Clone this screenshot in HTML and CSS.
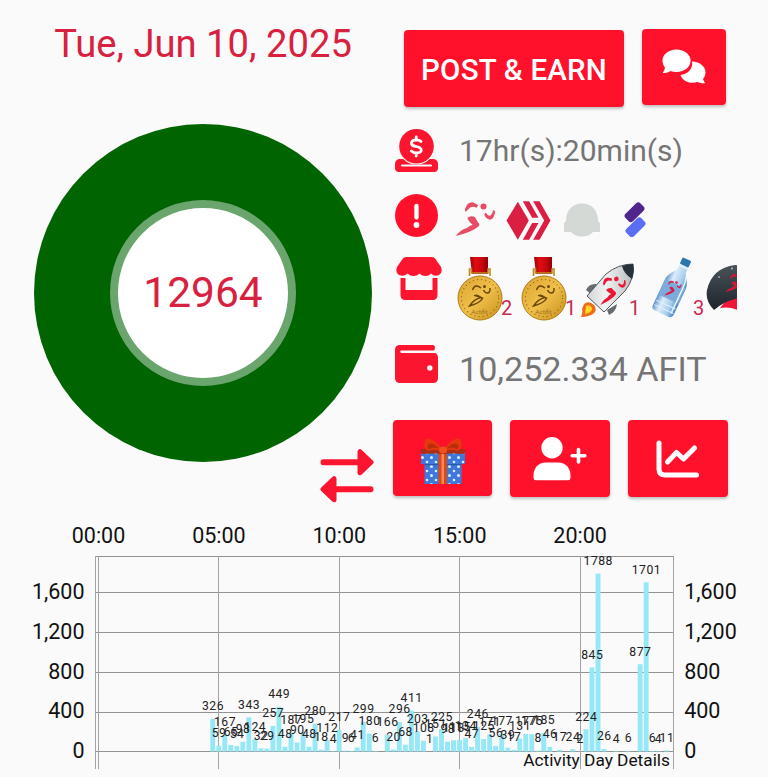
FILE: index.html
```html
<!DOCTYPE html>
<html lang="en">
<head>
<meta charset="utf-8">
<title>Activity Dashboard</title>
<link rel="stylesheet" href="styles.css">
</head>
<body>
<svg class="defs" aria-hidden="true">
  <defs>
    <linearGradient id="gold" x1="0" y1="0" x2="1" y2="1"><stop offset="0" stop-color="#d9a12c"/><stop offset=".5" stop-color="#f0c04a"/><stop offset="1" stop-color="#c98d1c"/></linearGradient>
    <linearGradient id="water" x1="0" y1="0" x2="1" y2="0"><stop offset="0" stop-color="#5e93c6"/><stop offset=".3" stop-color="#dcecf9"/><stop offset=".7" stop-color="#a6ccec"/><stop offset="1" stop-color="#4a86c0"/></linearGradient>
    <linearGradient id="hull" x1="0" y1="0" x2="1" y2="0"><stop offset="0" stop-color="#d2d4d6"/><stop offset=".4" stop-color="#f1f2f3"/><stop offset="1" stop-color="#b9bcbf"/></linearGradient>
    <linearGradient id="capShade" x1="0" y1="0" x2="0" y2="1"><stop offset="0" stop-color="#4a525a"/><stop offset="1" stop-color="#1d242b"/></linearGradient>
    <linearGradient id="ribbonTape" x1="0" y1="0" x2="1" y2="0"><stop offset="0" stop-color="#9b0008"/><stop offset=".3" stop-color="#e00c14"/><stop offset=".7" stop-color="#c4060e"/><stop offset="1" stop-color="#8e0006"/></linearGradient>
    <symbol id="runner" viewBox="12 34 128 112">
      <circle cx="101" cy="51" r="9.5"/>
      <path d="M43 60Q50 36 68 38L84 46L80 55Q62 46 53 60L45 68ZM131 62L137 65Q136 88 122 92Q110 92 103 76L108 70Q114 82 123 79Q130 74 131 62ZM50 87Q62 78 74 84L84 101Q92 108 84 114Q66 130 14 143Q32 122 48 119Q58 110 67 108Q56 100 50 87Z"/>
    </symbol>
    <symbol id="medal" viewBox="0 0 46 64">
      <path d="M13 0H31V17H15Z" fill="url(#ribbonTape)"/>
      <path d="M12.5 19V12H14.5V16H31V12H33V19" fill="none" stroke="#c08a20" stroke-width="1.6"/>
      <circle cx="23" cy="41" r="22" fill="url(#gold)" stroke="#b07c18" stroke-width="1"/>
      <circle cx="23" cy="41" r="18.6" fill="none" stroke="#8f6512" stroke-width="1.1" stroke-dasharray="1.1 3.1"/>
      <path d="M15.500 33Q18 26 24 31M33 31Q33.500 36 30 36Q28 36 26.500 33M12.500 49Q17 42 24 40.500L18 38.500Q20 37 25.500 41.500Q23 46 12.500 49Z" fill="none" stroke="#6b4709" stroke-width="1.500"/>
      <circle cx="27.500" cy="29.500" r="1.500" fill="#6b4709"/>
      <text class="medal-name" x="22.5" y="57" text-anchor="middle">Actifit</text>
    </symbol>
  </defs>
</svg>

<main class="page">
  <section class="summary">
    <div class="today">
      <h1 class="date">Tue, Jun 10, 2025</h1>
      <div class="ring"><div class="ring-core">12964</div></div>
      <svg class="swap" viewBox="0 0 54 54" fill="#fb152f" stroke="#fb152f" stroke-width="6" stroke-linecap="round" stroke-linejoin="round">
        <path d="M3.5 13.2H42M12 40.2H50.500" fill="none"/>
        <path d="M40 2.700V23.700L51 13.200ZM14 29.700V50.700L3 40.200Z" stroke-width="5"/>
      </svg>
    </div>

    <div class="details">
      <div class="actions">
        <button class="btn btn-post">POST &amp; EARN</button>
        <button class="btn btn-chat" aria-label="Chat">
          <svg width="44" height="36" viewBox="0 0 44 36" fill="#fff">
            <path d="M30 12.500C38 13 43.500 17.500 43.500 23.500C43.500 26 42.500 28.300 41 30C41.500 32 42.500 33 43.300 34.200C40.500 34.600 38 34 35.500 33C28 35.500 20.500 32 18.500 26C26 25.500 31.500 19 30 12.500Z"/>
            <path d="M14.500 .5C22.500 .5 28.600 5.500 28.600 11.500C28.600 18 22.500 23 14.500 23C12.300 23 10.300 22.600 8.500 22C6 23.700 3 24.300 .7 24C1.800 22.500 2.700 20.800 3 18.500C1.400 16.500 .5 14 .5 11.500C.5 5.500 6.500 .5 14.500 .5Z"/>
          </svg>
        </button>
      </div>

      <div class="row row-time">
        <svg class="icon" viewBox="0 0 43 43" fill="#fb152f">
          <path d="M4 30H9Q13 35 21.500 35Q30 35 34 30H39Q43 31 43 35V39Q43 43 39 43H4Q0 43 0 39V35Q0 31 4 30Z"/>
          <path d="M7 36.500H36" stroke="#fafafa" stroke-width="2.200" stroke-linecap="round"/>
          <circle cx="21.500" cy="17.300" r="18.300" fill="#fafafa"/>
          <circle cx="21.500" cy="17.300" r="17.300"/>
          <path d="M26 12.500Q24.500 10.800 21.500 10.800C15 10.800 15 16.500 20.500 17.300C28 18.300 28 24 21.500 24Q18.500 24 16.300 22M21.200 8V11M21.200 24V27" fill="none" stroke="#fff" stroke-width="2.800" stroke-linecap="round"/>
        </svg>
        <span class="reading">17hr(s):20min(s)</span>
      </div>

      <div class="row row-tokens">
        <svg class="icon" viewBox="0 0 43 43">
          <circle cx="21.500" cy="21.500" r="21.500" fill="#ff112b"/>
          <path d="M21.500 12V23.500" stroke="#fff" stroke-width="4.300" stroke-linecap="round"/>
          <circle cx="21.500" cy="31" r="2.900" fill="#fff"/>
        </svg>
        <div class="tokens">
          <svg class="tk-runner" fill="#e64c63"><use href="#runner" width="41" height="36"/></svg>
          <svg class="tk-hive" viewBox="367 61 134 117" fill="#db1f43">
            <path d="M368 119.500L402 63L435 119.500L402 177ZM417 62H436L464 111H445ZM448 62H467L500 119.500L467 177H448L481 119.500ZM445 127H464L436 177H417Z"/>
          </svg>
          <svg class="tk-cap" viewBox="0 0 36 34" fill="#d4d9d6"><path d="M0 29V20Q1 19 2 18C2 7 8 .5 18 .5C28 .5 34 7 34 18Q35 19 36 20V29H29Q25 33.500 18 33.500Q11 33.500 7 29Z"/></svg>
          <svg class="tk-links" viewBox="0 0 22 35">
            <rect x="0" y="5" width="21" height="10.500" rx="3" fill="#51268a" transform="rotate(-45 10.500 10.200)"/>
            <rect x="1" y="20" width="21" height="10.500" rx="3" fill="#5b6df2" transform="rotate(-45 11.500 25.200)"/>
          </svg>
        </div>
      </div>

      <div class="row row-items">
        <svg class="icon" viewBox="0 0 46 43" fill="#fb152f">
          <path d="M10 0H36Q38 0 39.500 2L45 10Q47 16 43 18Q38 20 35 16.500Q33 19 29.500 19Q26 19 23.500 16.500Q21 19 17.500 19Q14 19 11.500 16.500Q8 20 3 18Q-1 16 1 10L6.500 2Q8 0 10 0Z"/>
          <path d="M4.500 21H9.500V33H36.500V21H41.500V38Q41.500 43 36.500 43H9.500Q4.500 43 4.500 38Z"/>
        </svg>
        <div class="items">
          <span class="item item-medal"><svg width="46" height="64"><use href="#medal"/></svg><b>2</b></span>
          <span class="item item-medal"><svg width="46" height="64"><use href="#medal"/></svg><b>1</b></span>
          <span class="item item-rocket">
            <svg width="54" height="56" viewBox="0 0 54 56">
              <path d="M5 27Q8 20 16 21L10 31ZM26 47L36 41Q35 49 28 52Z" fill="#666c72"/>
              <path d="M3 41Q8 37 13 42Q17 47 12 51Q7 54 0 54Q2 49 1 46Z" fill="#ef6b17"/>
              <path d="M5 43Q9 41 11 45Q12 49 4 51Z" fill="#ffd62e"/>
              <path d="M6 33L25 11Q37 1 52 1Q54 15 44 28L23 49Z" fill="url(#hull)" stroke="#555" stroke-width="1"/>
              <path d="M41 3Q47 1 52 1Q54 8 51 16Q43 11 41 3Z" fill="#26313c"/>
              <use href="#runner" x="16" y="11" width="31" height="31" fill="#ed1534" transform="rotate(-12 31 27)"/>
            </svg><b>1</b>
          </span>
          <span class="item item-bottle">
            <svg width="44" height="62" viewBox="0 0 44 62">
              <g transform="rotate(25 22 31)">
                <path d="M18 6H27V11C28 16 34 19 34 27V55Q34 59 30 59H15Q11 59 11 55V27C11 19 17 16 18 11Z" fill="url(#water)"/>
                <path d="M11.500 26H33.500V43H11.500Z" fill="#7fabdc"/>
                <path d="M29 15Q31 20 31 26V55" fill="none" stroke="#eaf6ff" stroke-width="1.500"/>
                <path d="M12 49H33M12 54H33" stroke="#dff1ff" stroke-width="1"/>
                <rect x="17.800" y="-1" width="9.500" height="7" rx="1" fill="#2b76aa"/>
                <path d="M18 7.500H27" stroke="#e5f5ff" stroke-width="2"/>
              </g>
              <use href="#runner" x="13" y="21" width="18" height="20" fill="#cf2149"/>
            </svg><b>3</b>
          </span>
          <span class="item item-hat">
            <svg width="60" height="48" viewBox="0 0 60 48">
              <path d="M14 44Q22 33 29 31L60 30V47H34Q24 42 14 44Z" fill="#ee1739"/>
              <path d="M8 46Q-1 37 1 26Q6 4 29 1Q48 2 56 24L29 35Q17 38 8 46Z" fill="url(#capShade)"/>
              <circle cx="13" cy="13" r="1" fill="#9aa2a8"/><circle cx="26" cy="4.500" r="1" fill="#b7bcc0"/>
              <use href="#runner" x="19" y="8" width="22" height="22" fill="#d51637"/>
            </svg>
          </span>
        </div>
      </div>

      <div class="row row-wallet">
        <svg class="icon" viewBox="0 0 43 38">
          <path d="M5 0H37.500Q40 0 40 2.500Q40 5 38 7Q43 8 43 13V33Q43 38 38 38H5Q0 38 0 33V5Q0 0 5 0Z" fill="#fb152f"/>
          <path d="M6.500 6.700H41" stroke="#fafafa" stroke-width="2.400" stroke-linecap="round"/>
          <circle cx="34.800" cy="23" r="2.700" fill="#fff"/>
        </svg>
        <span class="reading reading-lg">10,252.334 AFIT</span>
      </div>

      <div class="shortcuts">
        <button class="btn btn-gift" aria-label="Rewards">
          <svg width="46" height="48" viewBox="0 0 46 48">
            <defs><pattern id="dots" width="9" height="9" patternUnits="userSpaceOnUse"><rect width="9" height="9" fill="#3e78dc"/><circle cx="2.500" cy="2.500" r="1.500" fill="#d6f1ff"/><circle cx="7" cy="7" r="1.300" fill="#d6f1ff"/></pattern></defs>
            <path d="M4.500 25H41.500V47H4.500Z" fill="url(#dots)"/>
            <path d="M1 16H45V27H1Z" fill="url(#dots)"/>
            <path d="M4.500 27.700H41.500" stroke="#275bad" stroke-width="1.200"/>
            <path d="M18.500 15H27V47H18.500Z" fill="#dc4917"/><path d="M21.500 15H24V47H21.500Z" fill="#f48a50"/>
            <path d="M0 13Q8 10 22 14Q37 10 46 13L44 17Q30 16 23 17Q14 16 2 17Z" fill="#a92f16"/>
            <path d="M22 13C17 4 9 0 6 2C3 6 4 12 8 14Q16 11 22 15ZM24 13C29 4 37 0 40 2C43 6 42 12 38 14Q30 11 24 15Z" fill="#e6380f"/>
            <path d="M20 12Q12 5 9 7Q6 10 9 12Q15 9 20 12ZM26 12Q34 5 37 7Q40 10 37 12Q31 9 26 12Z" fill="#b92c0c"/>
            <ellipse cx="23" cy="13" rx="4" ry="3.500" fill="#f05020"/>
          </svg>
        </button>
        <button class="btn btn-invite" aria-label="Invite">
          <svg width="54" height="44" viewBox="0 0 54 44" fill="#fff">
            <circle cx="19" cy="10.800" r="10.700"/>
            <path d="M13 25.500H25C33 25.500 37.500 31 37.500 39V41Q37.500 43.300 35 43.300H3Q.5 43.300 .5 41V39C.5 31 5 25.500 13 25.500Z"/>
            <path d="M45.500 12.500V25M39.200 18.800H51.800" stroke="#fff" stroke-width="3.600" stroke-linecap="round"/>
          </svg>
        </button>
        <button class="btn btn-stats" aria-label="Statistics">
          <svg width="44" height="38" viewBox="0 0 44 38" fill="none" stroke="#fff" stroke-width="5" stroke-linecap="round" stroke-linejoin="round">
            <path d="M3 3V29Q3 35 9 35H40.500M11.500 22L20.500 12.500L27.500 19L38.500 8"/>
          </svg>
        </button>
      </div>
    </div>
  </section>

  <svg class="chart" id="chart" width="768" height="257" viewBox="0 520 768 257" role="img" aria-label="Activity Day Details"></svg>
</main>
<script src="chart.js"></script>
</body>
</html>
```
FILE: styles.css
```css
* { box-sizing: border-box; }

body {
  margin: 0;
  background: #fafafa;
  font-family: Roboto, "Liberation Sans", sans-serif;
}

.defs { position: absolute; width: 0; height: 0; }

.page { width: 768px; height: 777px; overflow: hidden; }

.summary {
  display: grid;
  grid-template-columns: 393px 1fr;
  height: 520px;
}

.today { display: flex; flex-direction: column; padding: 20px 0 0 34px; }

.date {
  width: 338px;
  height: 48px;
  margin: 0;
  text-align: center;
  font-size: 38.200px;
  line-height: 48px;
  font-weight: 400;
  color: #d8213f;
  white-space: nowrap;
}

.ring {
  display: flex;
  width: 338px;
  height: 338px;
  margin-top: 56px;
  border-radius: 50%;
  background: #006400;
}

.ring-core {
  width: 186px;
  height: 186px;
  margin: auto;
  border: 8.500px solid #6ba56e;
  border-radius: 50%;
  background: #fff;
  color: #d8213f;
  font-size: 42.500px;
  line-height: 169px;
  text-align: center;
}

.swap { width: 54px; height: 54px; margin: -13px 0 0 286px; }

.details { display: flex; flex-direction: column; padding-top: 29px; }

.actions { display: flex; gap: 18px; padding-left: 11px; height: 79px; }

.btn {
  display: flex;
  align-items: center;
  justify-content: center;
  padding: 0;
  border: 0;
  border-radius: 4px;
  background: #ff112b;
  box-shadow: 0 2px 3px rgba(0, 0, 0, .24);
  color: #fff;
  font-family: inherit;
}

.btn-post {
  width: 220px;
  height: 77px;
  margin-top: 1px;
  padding-top: 2px;
  font-size: 29.500px;
  letter-spacing: .2px;
  font-weight: 500;
  white-space: nowrap;
}

.btn-chat { width: 84px; height: 76px; }

.row { display: flex; padding-left: 2px; }
.icon { flex: none; width: 43px; height: 43px; }

.row-time { height: 43px; margin-top: 21px; align-items: center; }

.reading {
  margin-left: 21px;
  font-size: 30px;
  color: #757575;
  white-space: nowrap;
}

.reading-lg { font-size: 34.100px; }

.row-tokens { margin-top: 22px; height: 43px; }

.tokens { display: flex; margin-left: 17px; padding-top: 7px; }
.tk-runner { width: 41px; height: 36px; }
.tk-hive { width: 45px; height: 39px; margin-left: 10px; }
.tk-cap { width: 36px; height: 34px; margin: 2px 0 0 13px; }
.tk-links { width: 22px; height: 35px; margin: 1px 0 0 24px; }

.row-items { margin-top: 20px; height: 66px; padding-left: 3px; }
.row-items .icon { width: 46px; }

.items { display: flex; width: 281px; margin-left: 14px; overflow: hidden; }

.item { display: flex; flex: none; align-items: flex-start; }
.item svg { flex: none; }
.item b { margin-top: 39px; font-size: 20px; line-height: 24px; font-weight: 400; color: #c92a50; }
.item-medal { width: 64px; padding-left: 1px; }
.item-medal b { margin-left: -2px; }
.item-rocket { width: 68px; padding-top: 6px; }
.item-rocket svg { margin-left: -3px; }
.item-rocket b { margin: 33px 0 0 -6px; }
.item-bottle { width: 54px; }
.item-bottle svg { margin-left: -1px; }
.item-bottle b { margin-left: -2px; }
.item-hat { padding-top: 7px; }

.medal-name { font-size: 6px; fill: #9b711d; }

.row-wallet { margin-top: 22px; height: 48px; align-items: flex-start; }
.row-wallet .icon { height: 38px; }
.row-wallet .reading { line-height: 48px; }

.shortcuts { display: flex; gap: 18px; margin-top: 27px; }
.btn-gift { width: 99px; height: 76px; padding-top: 5px; }
.btn-invite { width: 100px; height: 77px; }
.btn-stats { width: 100px; height: 77px; }

.chart { display: block; }
.grid-line { stroke: #929292; stroke-width: 1; }
.grid-line-v { stroke: #a3a3a3; stroke-width: 1; }
.bar { fill: #96e8f6; }
.axis { font-size: 21.500px; fill: #111; }
.value { font-size: 12.200px; letter-spacing: .5px; fill: #222; }
.caption { font-size: 17.300px; fill: #111; }
```
FILE: chart.js
```js
const chart = document.getElementById("chart");
const NS = "http://www.w3.org/2000/svg";
const originX = 98.3, slot = 6.02, baseY = 751.5, scale = 0.0995;

// [quarter-hour index, steps]
const steps = [
  [19,326],[20,59],[21,167],[22,65],[23,54],[24,98],[25,343],[26,124],[27,32],[28,29],
  [29,257],[30,449],[31,48],[32,187],[33,90],[34,195],[35,48],[36,280],[37,18],[38,112],
  [39,4],[40,217],[41,9],[42,6],[43,41],[44,299],[45,180],[46,6],[48,166],[49,20],
  [50,296],[51,68],[52,411],[53,203],[54,108],[55,1],[56,151],[57,225],[58,98],[59,113],
  [60,115],[61,134],[62,47],[63,246],[64,125],[65,171],[66,56],[67,177],[68,39],[69,17],
  [70,131],[71,177],[72,175],[73,8],[74,185],[75,46],[76.6,17],[78.8,24],[80,2],[81,224],
  [82,845],[83,1788],[84,26],[86,4],[88,6],[90,877],[91,1701],[92,6],[93,4],[94.4,11]
];

function add(tag, attrs, text) {
  const el = document.createElementNS(NS, tag);
  for (const key in attrs) el.setAttribute(key, attrs[key]);
  if (text !== undefined) el.textContent = text;
  chart.appendChild(el);
}

[556.5, 592.5, 632.5, 672.5, 712.5, 751.5].forEach(y =>
  add("line", { class: "grid-line", x1: 95, x2: 674, y1: y, y2: y }));
[95.5, 98.5, 218.5, 339.5, 459.5, 580.5, 673.5].forEach(x =>
  add("line", { class: "grid-line-v", x1: x, x2: x, y1: 556, y2: 769 }));

steps.forEach(([i, v]) => {
  const h = v * scale;
  add("rect", { class: "bar", x: originX + i * slot - 2.4, y: baseY - h, width: 4.9, height: h });
});
steps.forEach(([i, v]) =>
  add("text", { class: "value", x: originX + i * slot + 0.3, y: baseY - v * scale - 8.6, "text-anchor": "middle" }, v));

["00:00", "05:00", "10:00", "15:00", "20:00"].forEach((t, i) =>
  add("text", { class: "axis", x: 98.5 + i * 120.4, y: 542.7, "text-anchor": "middle" }, t));
["1,600", "1,200", "800", "400", "0"].forEach((t, i) => {
  const y = 599 + i * 39.8;
  add("text", { class: "axis", x: 84.5, y, "text-anchor": "end" }, t);
  add("text", { class: "axis", x: 684.2, y, "text-anchor": "start" }, t);
});
add("text", { class: "caption", x: 670, y: 765.8, "text-anchor": "end" }, "Activity Day Details");
```
